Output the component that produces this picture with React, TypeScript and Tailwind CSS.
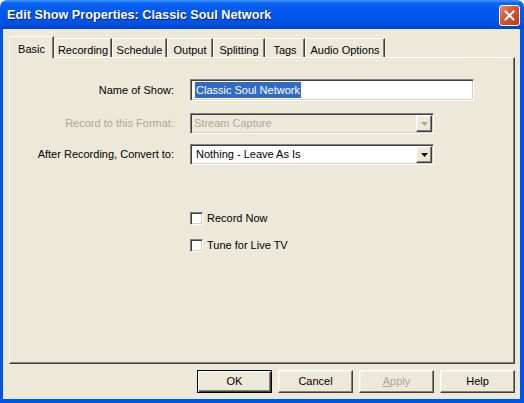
import React from "react";

// classic 3D edges
const sunken =
  "border border-t-[#808080] border-l-[#808080] border-b-white border-r-white shadow-[inset_1px_1px_0_#404040,inset_-1px_-1px_0_#d4d0c8]";
const raised =
  "border border-t-white border-l-white border-b-[#404040] border-r-[#404040] shadow-[inset_-1px_-1px_0_#808080,inset_1px_1px_0_#f4f2e8]";

const TABS: { label: string; w: string }[] = [
  { label: "Basic", w: "w-[45px]" },
  { label: "Recording", w: "w-[58px]" },
  { label: "Schedule", w: "w-[55px]" },
  { label: "Output", w: "w-[46px]" },
  { label: "Splitting", w: "w-[52px]" },
  { label: "Tags", w: "w-[40px]" },
  { label: "Audio Options", w: "w-[80px]" },
];

function Arrow({ disabled }: { disabled?: boolean }) {
  return (
    <div className={`flex w-[16px] items-center justify-center bg-[#ece9d8] ${raised}`}>
      <svg width="7" height="4" viewBox="0 0 7 4">
        <path d="M0 0h7L3.5 4z" fill={disabled ? "#aca899" : "#000"} />
      </svg>
    </div>
  );
}

function Combo({ value, disabled }: { value: string; disabled?: boolean }) {
  return (
    <div
      className={`flex h-[21px] w-[244px] p-[1px] ${sunken} ${disabled ? "bg-[#ece9d8] text-[#aca899]" : "bg-white text-black"}`}
    >
      <div className={`flex flex-1 items-center ${disabled ? "pl-[2px]" : "pl-[4px]"}`}>{value}</div>
      <Arrow disabled={disabled} />
    </div>
  );
}

function Row({
  label,
  dim,
  children,
}: {
  label: string;
  dim?: boolean;
  children: React.ReactNode;
}) {
  return (
    <div className="flex items-center">
      <div className={`w-[164px] text-right ${dim ? "text-[#aca899]" : "text-black"}`}>{label}</div>
      <div className="ml-[16px]">{children}</div>
    </div>
  );
}

function Check({ label }: { label: string }) {
  return (
    <div className="ml-[180px] flex h-[13px] items-center leading-[13px]">
      <div className={`h-[13px] w-[13px] bg-white ${sunken}`} />
      <span className="ml-[4px]">{label}</span>
    </div>
  );
}

function Btn({ children, def, disabled }: { children: React.ReactNode; def?: boolean; disabled?: boolean }) {
  const edge = def
    ? "border border-black shadow-[inset_1px_1px_0_#fff,inset_-1px_-1px_0_#404040,inset_-2px_-2px_0_#808080]"
    : raised;
  return (
    <div
      className={`flex h-[23px] w-[75px] items-center justify-center bg-[#ece9d8] ${edge} ${disabled ? "text-[#aca899]" : "text-black"}`}
    >
      {children}
    </div>
  );
}

export default function App() {
  return (
    <div className="flex h-[403px] w-[524px] flex-col bg-white font-['Liberation_Sans',Arial,sans-serif] text-[11px]">
      {/* title bar */}
      <div className="flex h-[29px] items-start rounded-t-[7px] bg-[linear-gradient(to_bottom,#3d95ff_0%,#0a63f0_12%,#0058ee_40%,#0055e8_70%,#004bdc_90%,#0043c6_100%)] pr-[4px] pl-[7px]">
        <div className="mt-[6px] flex-1 text-[12.7px] font-bold text-white [text-shadow:1px_1px_0_#0a1f8f]">
          Edit Show Properties: Classic Soul Network
        </div>
        <div className="mt-[5px] flex h-[21px] w-[21px] items-center justify-center rounded-[3px] border border-white bg-[linear-gradient(to_bottom_right,#e9876a,#d8532f_45%,#c03a1a)]">
          <svg width="11" height="11" viewBox="0 0 11 11">
            <path d="M1.5 1.5l8 8M9.5 1.5l-8 8" stroke="#fff" strokeWidth="2" strokeLinecap="square" />
          </svg>
        </div>
      </div>

      {/* frame + body */}
      <div className="flex flex-1 flex-col border-r-[4px] border-b-[4px] border-l-[3px] border-[#0055e5] bg-[#ece9d8]">
        {/* tabs */}
        <div className="mt-[7px] ml-[6px] flex h-[21px] items-end">
          {TABS.map((t, i) =>
            i === 0 ? (
              <div
                key={t.label}
                className={`relative z-10 mb-[-1px] flex h-[22px] ${t.w} items-start justify-center rounded-tl-[2px] border-t border-l border-white bg-[#ece9d8] pt-[4px] shadow-[inset_-1px_0_0_#808080] border-r border-r-[#404040]`}
              >
                {t.label}
              </div>
            ) : (
              <div
                key={t.label}
                className={`flex h-[19px] ${t.w} items-start justify-center rounded-tl-[2px] border-t border-l border-white border-r border-r-[#404040] pt-[3px] shadow-[inset_-1px_0_0_#808080]`}
              >
                {t.label}
              </div>
            )
          )}
        </div>

        {/* panel */}
        <div className="mr-[5px] ml-[6px] flex h-[307px] flex-col border-t border-l border-white border-r border-b border-r-[#404040] border-b-[#404040] pt-[21px] shadow-[inset_-1px_-1px_0_#808080]">
          <Row label="Name of Show:">
            <div className={`flex h-[22px] w-[284px] items-center bg-white pl-[4px] ${sunken}`}>
              <span className="bg-[#316ac5] px-[1px] text-white">Classic Soul Network</span>
            </div>
          </Row>
          <div className="mt-[12px]">
            <Row label="Record to this Format:" dim>
              <Combo value="Stream Capture" disabled />
            </Row>
          </div>
          <div className="mt-[10px]">
            <Row label="After Recording, Convert to:">
              <Combo value="Nothing - Leave As Is" />
            </Row>
          </div>
          <div className="mt-[47px]">
            <Check label="Record Now" />
          </div>
          <div className="mt-[14px]">
            <Check label="Tune for Live TV" />
          </div>
        </div>

        {/* buttons */}
        <div className="mt-[6px] mr-[5px] flex justify-end gap-[6px]">
          <Btn def>OK</Btn>
          <Btn>Cancel</Btn>
          <Btn disabled>
            <span>
              <span className="underline">A</span>pply
            </span>
          </Btn>
          <Btn>Help</Btn>
        </div>
      </div>
    </div>
  );
}
